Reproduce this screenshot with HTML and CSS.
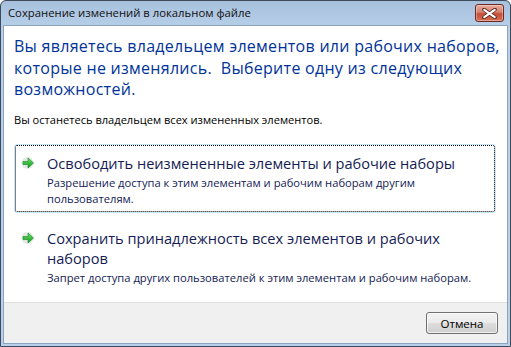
FILE: index.html
```html
<!doctype html>
<html lang="ru">
    <head>
        <meta charset="utf-8">
        <title>Сохранение изменений в локальном файле</title>
        <meta name="viewport" content="width=device-width, initial-scale=1">
        <link rel="stylesheet" href="styles.css">
    </head>
    <body>
        <div class="window">
            <div class="titlebar">
                <span class="caption">Сохранение изменений в локальном файле</span>
                <div class="close">
                    <svg width="15" height="11" viewBox="0 0 15 11">
                        <path d="M2 1.5 L13 9.5 M13 1.5 L2 9.5" stroke="#5a2620" stroke-width="3.6" stroke-linecap="round"/>
                        <path d="M2.3 1.8 L12.7 9.2 M12.7 1.8 L2.3 9.2" stroke="#fff" stroke-width="2.2" stroke-linecap="round"/>
                    </svg>
                </div>
            </div>
            <div class="client">
                <main class="content">
                    <h1 class="instruction">Вы являетесь владельцем элементов или рабочих наборов,<br>которые не изменялись.&nbsp; Выберите одну из следующих<br>возможностей.</h1>
                    <p class="text">Вы останетесь владельцем всех измененных элементов.</p>

                    <div class="command focused">
                        <svg class="arrow" width="15" height="14" viewBox="0 0 15 14">
                            <defs>
                                <linearGradient id="g1" x1="0" y1="0" x2="0" y2="1">
                                    <stop offset="0" stop-color="#6fe06a"/>
                                    <stop offset="1" stop-color="#0a9a1c"/>
                                </linearGradient>
                            </defs>
                            <circle cx="6.5" cy="7" r="6" fill="#e4e8e4"/>
                            <path d="M2 5.5 H7 V2 L12.5 7 L7 12 V8.5 H2 Z" fill="url(#g1)" stroke="#138a22" stroke-width="0.6"/>
                        </svg>
                        <div class="command-body">
                            <div class="command-title">Освободить неизмененные элементы и рабочие наборы</div>
                            <div class="command-note">Разрешение доступа к этим элементам и рабочим наборам другим<br>пользователям.</div>
                        </div>
                    </div>

                    <div class="command">
                        <svg class="arrow" width="15" height="14" viewBox="0 0 15 14">
                            <defs>
                                <linearGradient id="g2" x1="0" y1="0" x2="0" y2="1">
                                    <stop offset="0" stop-color="#6fe06a"/>
                                    <stop offset="1" stop-color="#0a9a1c"/>
                                </linearGradient>
                            </defs>
                            <circle cx="6.5" cy="7" r="6" fill="#e4e8e4"/>
                            <path d="M2 5.5 H7 V2 L12.5 7 L7 12 V8.5 H2 Z" fill="url(#g2)" stroke="#138a22" stroke-width="0.6"/>
                        </svg>
                        <div class="command-body">
                            <div class="command-title">Сохранить принадлежность всех элементов и рабочих<br>наборов</div>
                            <div class="command-note">Запрет доступа других пользователей к этим элементам и рабочим наборам.</div>
                        </div>
                    </div>
                </main>
                <footer class="footer">
                    <button class="button" type="button">Отмена</button>
                </footer>
            </div>
        </div>
    </body>
</html>
```

FILE: styles.css
```css
* {
    margin: 0;
    padding: 0;
    box-sizing: border-box;
}

body {
    font-family: "Open Sans", "Noto Sans", sans-serif;
    background: #fff;
}

.window {
    width: 511px;
    height: 347px;
    border: 1px solid #3c4a5c;
    border-radius: 6px 6px 0 0;
    background: linear-gradient(#a7c0dc 0px, #b9d1ea 30px, #b9d1ea 100%);
    display: flex;
    flex-direction: column;
    padding: 0 2px 2px 2px;
}

.titlebar {
    height: 24px;
    display: flex;
    align-items: center;
    justify-content: space-between;
    padding: 0 4px 2px 5px;
}

.caption {
    font-size: 11.3px;
    color: #101010;
}

.close {
    width: 29px;
    height: 18px;
    margin-top: 2px;
    border: 1px solid #6b2a22;
    border-radius: 3px;
    background: linear-gradient(#e9ab9c 0%, #d6826f 45%, #c44c35 55%, #d87258 100%);
    box-shadow: inset 0 0 0 1px rgba(255,255,255,0.35);
    display: flex;
    align-items: center;
    justify-content: center;
}

.client {
    flex: 1;
    background: #fff;
    border: 1px solid #8aa4c0;
    display: flex;
    flex-direction: column;
}

.content {
    flex: 1;
    padding: 10px 11px 0 10px;
}

.instruction {
    font-size: 16px;
    letter-spacing: 0.28px;
    white-space: nowrap;
    font-weight: normal;
    line-height: 21.5px;
    color: #003399;
}

.text {
    font-size: 11.1px;
    line-height: 15px;
    color: #000;
    margin-top: 11px;
}

.command {
    display: flex;
    align-items: flex-start;
    margin-top: 17px;
    padding: 8px 8px 5px 6px;
    border: 1px solid transparent;
    border-radius: 3px;
    color: #151c55;
}

.command + .command {
    margin-top: 6px;
}

.focused {
    border-color: #c5e6f5;
    outline: 1px dotted #000;
    outline-offset: -2px;
}

.arrow {
    flex: none;
    margin: 3px 11px 0 0;
}

.command-title {
    font-size: 14.6px;
    line-height: 20px;
}

.command-note {
    font-size: 11.2px;
    line-height: 16px;
    margin-top: 2px;
}

.footer {
    height: 41px;
    background: #f0f0f0;
    border-top: 1px solid #dfdfdf;
    display: flex;
    align-items: center;
    justify-content: flex-end;
    padding-right: 9px;
}

.button {
    width: 72px;
    height: 22px;
    font-family: inherit;
    font-size: 11.5px;
    color: #000;
    border: 1px solid #707070;
    border-radius: 3px;
    background: linear-gradient(#f2f2f2 0%, #ebebeb 48%, #dddddd 52%, #cfcfcf 100%);
    box-shadow: inset 0 0 0 1px rgba(255,255,255,0.7);
}
```
